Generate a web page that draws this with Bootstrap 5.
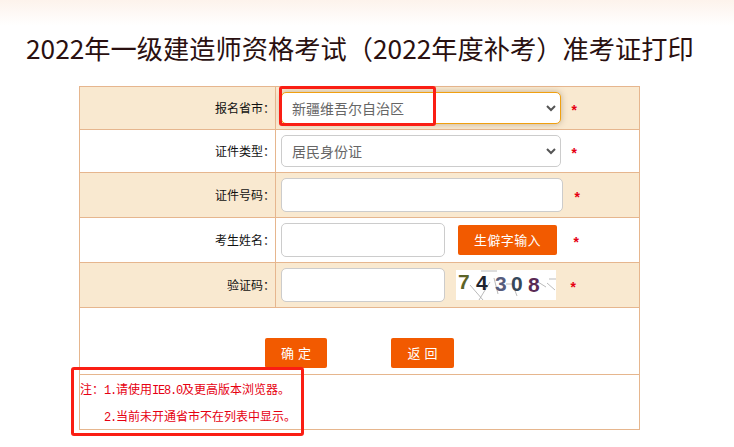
<!DOCTYPE html>
<html lang="en">
<head>
    <meta charset="UTF-8">
    <meta name="viewport" content="width=device-width, initial-scale=1.0">
    <title>准考证打印</title>
    <link href="https://cdn.jsdelivr.net/npm/bootstrap@5.3.2/dist/css/bootstrap.min.css" rel="stylesheet">
    <style>
        body {
            font-family: "Noto Sans CJK SC", "Liberation Sans", sans-serif;
            background: linear-gradient(#fdf3ec 0, #ffffff 26px) no-repeat;
            overflow: hidden;
            height: 447px;
        }
        .page-title {
            font-family: "Noto Sans CJK SC", "Liberation Sans", sans-serif;
            font-size: 26.25px;
            line-height: 36px;
            color: #2a1010;
            margin: 0;
            padding: 30px 0 0 26px;
            height: 86px;
            white-space: nowrap;
        }
        .print-form {
            width: 561px;
            margin-left: 79px;
            border-collapse: collapse;
            table-layout: fixed;
            font-size: 12px;
            color: #111;
        }
        .print-form td {
            border: 1px solid #e6b68e;
            padding: 0;
            vertical-align: middle;
        }
        .print-form .tint td { background: #f9e9d0; }
        .cell-label { width: 196px; text-align: right; padding-right: 0 !important; }
        .cell-field { padding-left: 5px !important; }
        .h-a { height: 43px; }
        .h-b { height: 45px; }
        .h-c { height: 67px; }
        .h-d { height: 55px; }
        .field-sel.form-select,
        .field-in.form-control {
            font-size: 14px;
            color: #666;
            border: 1px solid #ccc;
            border-radius: 5px;
            height: 32px;
            padding: 0 30px 0 10px;
            line-height: 30px;
            flex: none;
        }
        .field-sel.form-select {
            background-image: url("data:image/svg+xml,%3csvg xmlns='http://www.w3.org/2000/svg' viewBox='0 0 10 7'%3e%3cpath fill='none' stroke='%23555' stroke-width='2' d='M1 1l4 4 4-4'/%3e%3c/svg%3e");
            background-position: right 4px center;
            background-size: 10px 7px;
        }
        .field-in.form-control { height: 34px; padding: 0 10px; }
        .w-long { width: 280px; }
        .w-full { width: 282px; }
        .w-short { width: 164px; }
        .field-sel.is-focus {
            border-color: #f0a010;
            box-shadow: 0 0 6px rgba(120, 100, 70, .45);
        }
        .req-star { color: #e60012; font-size: 14px; font-weight: 700; line-height: 1; padding-top: 8px; font-family: "Liberation Mono", monospace; }
        .req-a { margin-left: 9px; }
        .req-b { margin-left: 10px; }
        .req-c { margin-left: 15px; }
        .req-d { margin-left: 13px; }
        .btn-rare.btn,
        .btn-act.btn {
            background: #f25a00;
            border: 0;
            border-radius: 2px;
            color: #fff;
            font-size: 13px;
            line-height: 30px;
            height: 30px;
            padding: 0;
        }
        .btn-rare.btn { width: 99px; margin-left: 13px; letter-spacing: .4px; }
        .btn-act.btn { width: 62px; letter-spacing: 4px; text-indent: 4px; }
        .btn-act.btn + .btn-act.btn { width: 63px; }
        .act-row { padding: 29px 0 6px 185px; gap: 64px; }
        .captcha-pic { width: 100px; height: 30px; margin-left: 11px; flex: none; background: #fff; overflow: visible; }
        .print-form td.note-text {
            color: #e60012;
            font-family: "Noto Sans CJK SC", serif;
            font-size: 12px;
            white-space: pre;
            vertical-align: top;
        }
        .note-line { display: block; height: 27px; line-height: 27px; overflow: hidden; }
        .note-text .latin { font-family: "Liberation Mono", monospace; letter-spacing: -1.2px; line-height: 1; }
        .mark-box {
            position: absolute;
            border: 3px solid #fa1e14;
            border-radius: 3px;
            pointer-events: none;
        }
        .mark-top { left: 279px; top: 86px; width: 157px; height: 40px; }
        .mark-bottom { left: 71px; top: 367px; width: 233px; height: 69px; }
    </style>
</head>
<body class="position-relative">
    <h1 class="page-title fw-normal">2022年一级建造师资格考试（2022年度补考）准考证打印</h1>

    <form>
        <table class="print-form">
            <tr class="tint h-a">
                <td class="cell-label">报名省市：</td>
                <td class="cell-field">
                    <div class="d-flex align-items-center">
                        <select class="form-select field-sel w-long is-focus"><option>新疆维吾尔自治区</option></select>
                        <span class="req-star req-a">*</span>
                    </div>
                </td>
            </tr>
            <tr class="h-a">
                <td class="cell-label">证件类型：</td>
                <td class="cell-field">
                    <div class="d-flex align-items-center">
                        <select class="form-select field-sel w-long"><option>居民身份证</option></select>
                        <span class="req-star req-a">*</span>
                    </div>
                </td>
            </tr>
            <tr class="tint h-b">
                <td class="cell-label">证件号码：</td>
                <td class="cell-field">
                    <div class="d-flex align-items-center">
                        <input type="text" class="form-control field-in w-full">
                        <span class="req-star req-b">*</span>
                    </div>
                </td>
            </tr>
            <tr class="h-b">
                <td class="cell-label">考生姓名：</td>
                <td class="cell-field">
                    <div class="d-flex align-items-center">
                        <input type="text" class="form-control field-in w-short">
                        <button type="button" class="btn btn-rare">生僻字输入</button>
                        <span class="req-star req-c">*</span>
                    </div>
                </td>
            </tr>
            <tr class="tint h-b">
                <td class="cell-label">验证码：</td>
                <td class="cell-field">
                    <div class="d-flex align-items-center">
                        <input type="text" class="form-control field-in w-short">
                        <svg class="captcha-pic" viewBox="0 0 100 30">
                            <g fill="none" stroke="#aaa" stroke-width=".8">
                                <path d="M14 15 L27 30"/><path d="M23 30 L34 12"/><path d="M25 1 H41"/>
                                <path d="M38 8 L42 24"/><path d="M50 14 H56"/><path d="M58 18 L61 26"/>
                                <path d="M82 12 L90 17"/><path d="M91 13 L99 20"/><path d="M93 9 H100"/>
                            </g>
                            <g font-family="Liberation Sans, sans-serif" font-weight="700" font-size="21">
                                <text x="2" y="19" fill="#5c6428">7</text>
                                <text x="20" y="20" fill="#20242e">4</text>
                                <text x="39" y="21" fill="#565c7c">3</text>
                                <text x="55" y="21" fill="#36485a">0</text>
                                <text x="72" y="22" fill="#5a2a55">8</text>
                            </g>
                        </svg>
                        <span class="req-star req-d">*</span>
                    </div>
                </td>
            </tr>
            <tr class="h-c">
                <td colspan="2">
                    <div class="d-flex act-row">
                        <button type="button" class="btn btn-act">确定</button>
                        <button type="button" class="btn btn-act">返回</button>
                    </div>
                </td>
            </tr>
            <tr class="h-d">
                <td colspan="2" class="note-text"><span class="note-line">注：<span class="latin">1.</span>请使用<span class="latin">IE8.0</span>及更高版本浏览器。</span><span class="note-line"><span class="latin">    2.</span>当前未开通省市不在列表中显示。</span></td>
            </tr>
        </table>
    </form>

    <div class="mark-box mark-top"></div>
    <div class="mark-box mark-bottom"></div>

    <script src="https://cdn.jsdelivr.net/npm/bootstrap@5.3.2/dist/js/bootstrap.bundle.min.js"></script>
</body>
</html>
